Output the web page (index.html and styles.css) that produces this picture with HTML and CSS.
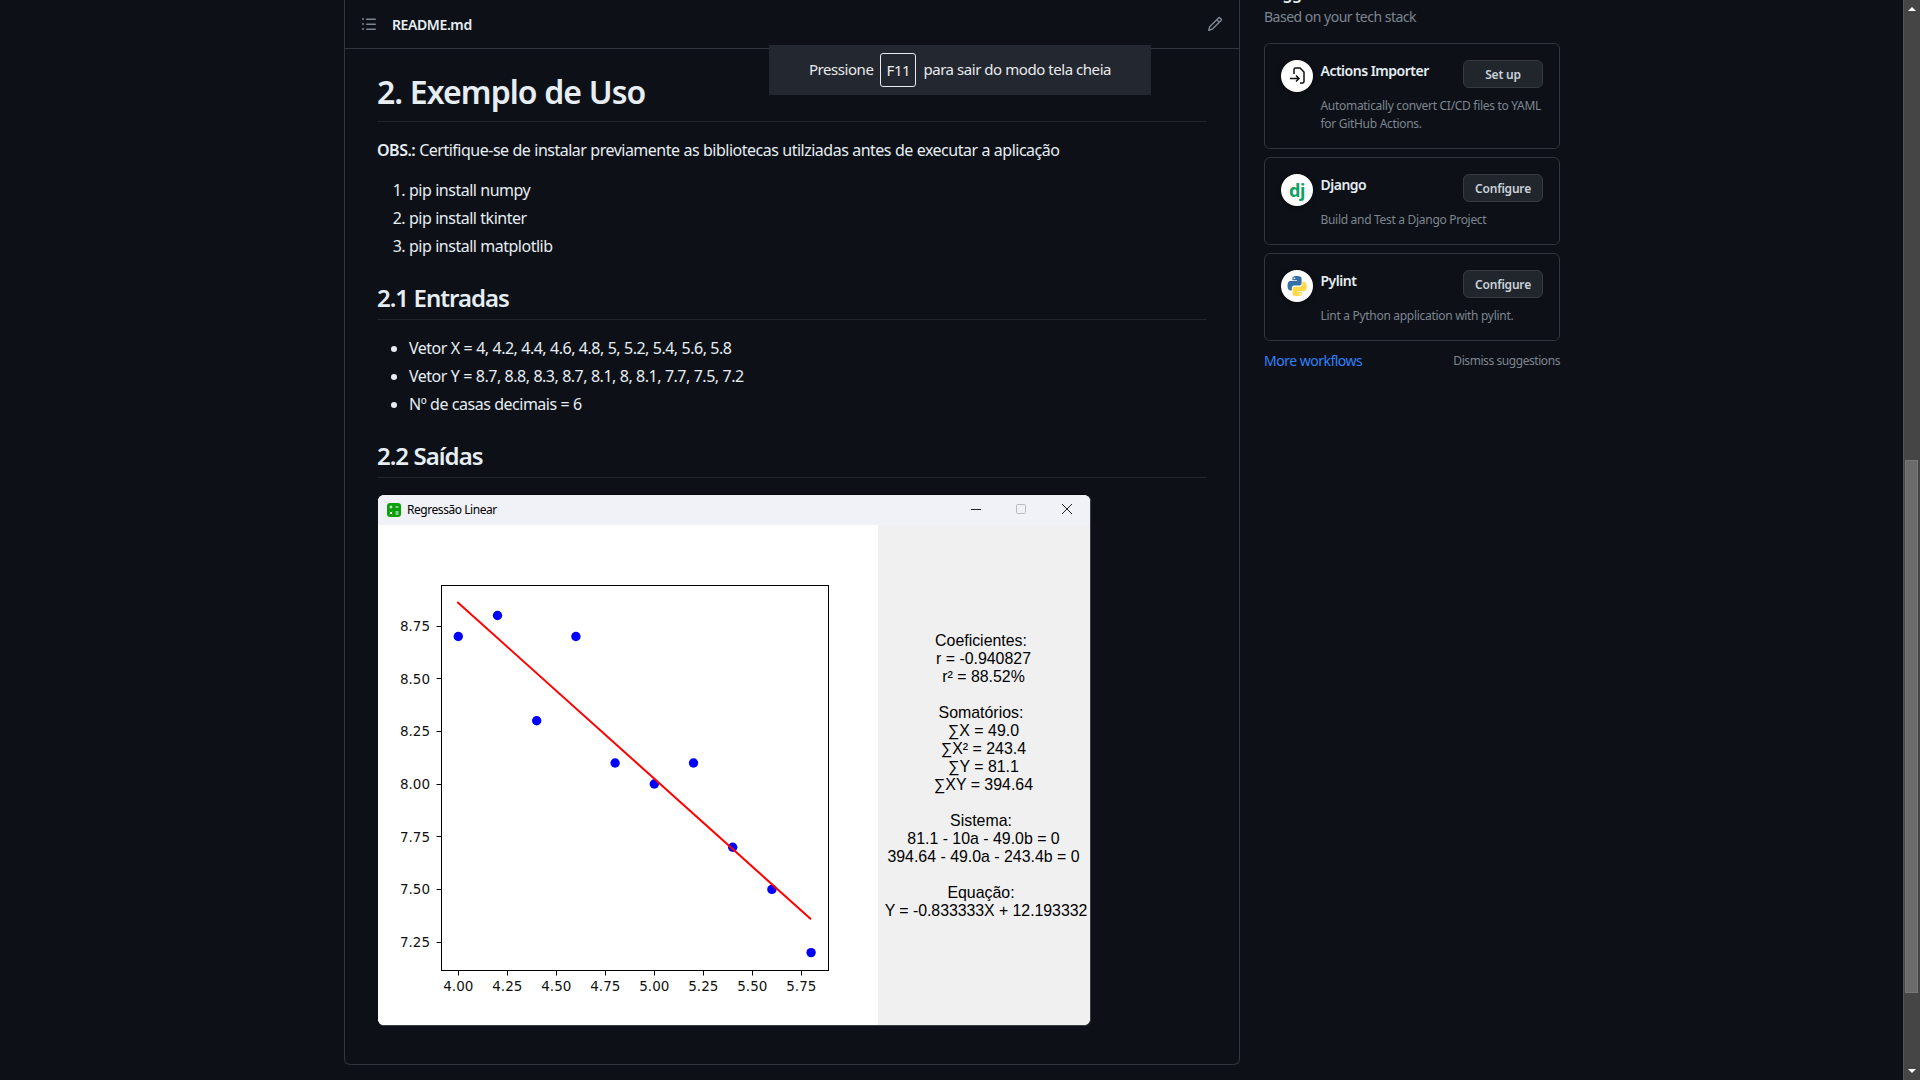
FILE: index.html
```html
<!DOCTYPE html>
<html lang="pt-BR">
<head>
    <meta charset="UTF-8">
    <title>README.md</title>
    <link rel="stylesheet" href="styles.css">
</head>
<body>
    <div class="page">
        <div class="layout">
            <!-- README -->
            <main class="readme">
                <div class="readme-header">
                    <svg class="icon-list" viewBox="0 0 16 16" width="16" height="16"><path d="M5.75 2.5h8.5a.75.75 0 0 1 0 1.5h-8.5a.75.75 0 0 1 0-1.5Zm0 5h8.5a.75.75 0 0 1 0 1.5h-8.5a.75.75 0 0 1 0-1.5Zm0 5h8.5a.75.75 0 0 1 0 1.5h-8.5a.75.75 0 0 1 0-1.5ZM2 14a1 1 0 1 1 0-2 1 1 0 0 1 0 2Zm1-6a1 1 0 1 1-2 0 1 1 0 0 1 2 0ZM2 4a1 1 0 1 1 0-2 1 1 0 0 1 0 2Z"/></svg>
                    <span class="readme-name">README.md</span>
                    <svg class="icon-edit" viewBox="0 0 16 16" width="16" height="16"><path d="M11.013 1.427a1.75 1.75 0 0 1 2.474 0l1.086 1.086a1.75 1.75 0 0 1 0 2.474l-8.61 8.61c-.21.21-.47.364-.756.445l-3.251.93a.75.75 0 0 1-.927-.928l.929-3.25c.081-.286.235-.547.445-.758l8.61-8.61Zm.176 4.823L9.75 4.81l-6.286 6.287a.253.253 0 0 0-.064.108l-.558 1.953 1.953-.558a.253.253 0 0 0 .108-.064Zm1.238-3.763a.25.25 0 0 0-.354 0L10.811 3.75l1.439 1.44 1.263-1.263a.25.25 0 0 0 0-.354Z"/></svg>
                </div>
                <article class="markdown">
                    <h1>2. Exemplo de Uso</h1>
                    <p><strong>OBS.:</strong> Certifique-se de instalar previamente as bibliotecas utilziadas antes de executar a aplicação</p>
                    <ol>
                        <li>pip install numpy</li>
                        <li>pip install tkinter</li>
                        <li>pip install matplotlib</li>
                    </ol>
                    <h2>2.1 Entradas</h2>
                    <ul>
                        <li>Vetor X = 4, 4.2, 4.4, 4.6, 4.8, 5, 5.2, 5.4, 5.6, 5.8</li>
                        <li>Vetor Y = 8.7, 8.8, 8.3, 8.7, 8.1, 8, 8.1, 7.7, 7.5, 7.2</li>
                        <li>Nº de casas decimais = 6</li>
                    </ul>
                    <h2>2.2 Saídas</h2>

                    <!-- janela da aplicação -->
                    <div class="window">
                        <div class="titlebar">
                            <svg class="app-icon" viewBox="0 0 14 14" width="14" height="14">
                                <rect width="14" height="14" rx="3" fill="#0b9f0b"/>
                                <path d="M2.5 4h3M4 2.5v3M8.5 4h3M2.8 8.8l2.4 2.4M5.2 8.8l-2.4 2.4M8.5 9h3M8.5 11h3" stroke="#fff" stroke-width="1" fill="none"/>
                            </svg>
                            <span class="window-title">Regressão Linear</span>
                            <svg class="window-controls" viewBox="0 0 101 10" width="101" height="10">
                                <path d="M0 5.5h10" stroke="#222" fill="none"/>
                                <rect x="45.5" y="0.5" width="9" height="9" rx="1" stroke="#bbb" fill="none"/>
                                <path d="M91 0l10 10M101 0L91 10" stroke="#222" fill="none"/>
                            </svg>
                        </div>
                        <div class="window-body">
                            <svg class="chart" viewBox="0 0 501 501" width="501" height="501">
                                <rect class="axes" x="64.5" y="60.5" width="387" height="385"/>
                                <g class="ticks">
                                    <path d="M81.5 445.5v5M130.5 445.5v5M179.5 445.5v5M228.5 445.5v5M277.5 445.5v5M326.5 445.5v5M375.5 445.5v5M424.5 445.5v5"/>
                                    <path d="M59.5 101.5h5M59.5 153.5h5M59.5 206.5h5M59.5 259.5h5M59.5 311.5h5M59.5 364.5h5M59.5 417.5h5"/>
                                </g>
                                <g class="labels-x">
                                    <text x="81.3" y="466">4.00</text>
                                    <text x="130.3" y="466">4.25</text>
                                    <text x="179.3" y="466">4.50</text>
                                    <text x="228.3" y="466">4.75</text>
                                    <text x="277.3" y="466">5.00</text>
                                    <text x="326.3" y="466">5.25</text>
                                    <text x="375.3" y="466">5.50</text>
                                    <text x="424.3" y="466">5.75</text>
                                </g>
                                <g class="labels-y">
                                    <text x="53" y="106">8.75</text>
                                    <text x="53" y="158.7">8.50</text>
                                    <text x="53" y="211.4">8.25</text>
                                    <text x="53" y="264">8.00</text>
                                    <text x="53" y="316.7">7.75</text>
                                    <text x="53" y="369.4">7.50</text>
                                    <text x="53" y="422">7.25</text>
                                </g>
                                <g class="points">
                                    <circle cx="81.3" cy="111.5" r="4.7"/>
                                    <circle cx="120.5" cy="90.5" r="4.7"/>
                                    <circle cx="159.7" cy="195.8" r="4.7"/>
                                    <circle cx="198.9" cy="111.5" r="4.7"/>
                                    <circle cx="238.1" cy="238" r="4.7"/>
                                    <circle cx="277.3" cy="259" r="4.7"/>
                                    <circle cx="316.5" cy="238" r="4.7"/>
                                    <circle cx="355.7" cy="322.2" r="4.7"/>
                                    <circle cx="394.9" cy="364.4" r="4.7"/>
                                    <circle cx="434.1" cy="427.6" r="4.7"/>
                                </g>
                                <line class="fit" x1="80.3" y1="77" x2="434" y2="394.3"/>
                            </svg>
                            <div class="results">
                                <span class="result-head">Coeficientes:</span><br>
                                r = -0.940827<br>
                                r² = 88.52%<br>
                                <br>
                                <span class="result-head">Somatórios:</span><br>
                                ∑X = 49.0<br>
                                ∑X² = 243.4<br>
                                ∑Y = 81.1<br>
                                ∑XY = 394.64<br>
                                <br>
                                <span class="result-head">Sistema:</span><br>
                                81.1 - 10a - 49.0b = 0<br>
                                394.64 - 49.0a - 243.4b = 0<br>
                                <br>
                                <span class="result-head">Equação:</span><br>
                                <span class="result-eq">Y = -0.833333X + 12.193332</span>
                            </div>
                        </div>
                    </div>
                </article>
            </main>

            <!-- sugestões de workflows -->
            <aside class="sidebar">
                <h3>Suggested workflows</h3>
                <p class="sidebar-note">Based on your tech stack</p>
                <div class="card">
                    <span class="avatar">
                        <svg viewBox="0 0 32 32" width="32" height="32"><path d="M13 14V9.500A1.500 1.500 0 0 1 14.500 8H19l4 4v9.500a1.500 1.500 0 0 1-1.500 1.500H19M9 18.500h9M15 15.500l3 3-3 3" fill="none" stroke="#111" stroke-width="1.500"/></svg>
                    </span>
                    <div class="card-main">
                        <div class="card-top">
                            <span class="card-title">Actions Importer</span>
                            <button class="btn">Set up</button>
                        </div>
                        <p class="card-desc">Automatically convert CI/CD files to YAML for GitHub Actions.</p>
                    </div>
                </div>
                <div class="card">
                    <span class="avatar avatar-dj">dj</span>
                    <div class="card-main">
                        <div class="card-top">
                            <span class="card-title">Django</span>
                            <button class="btn">Configure</button>
                        </div>
                        <p class="card-desc">Build and Test a Django Project</p>
                    </div>
                </div>
                <div class="card">
                    <span class="avatar">
                        <svg viewBox="0 0 32 32" width="32" height="32">
                            <path fill="#3472a6" d="M15.900 6c-4.800 0-4.500 2.100-4.500 2.100v2.200H16v.7H9.600S6.500 10.600 6.500 15.600s2.700 4.800 2.700 4.800h1.600v-2.300s-.1-2.700 2.700-2.700h4.600s2.500 0 2.500-2.500V8.600S21 6 15.900 6Zm-2.500 1.400a.8.8 0 1 1 0 1.700.8.8 0 0 1 0-1.700Z"/>
                            <path fill="#ffd845" transform="rotate(180 16.100 16.100)" d="M15.900 6c-4.800 0-4.500 2.100-4.500 2.100v2.200H16v.7H9.600S6.500 10.600 6.500 15.600s2.700 4.800 2.700 4.800h1.600v-2.300s-.1-2.700 2.700-2.700h4.600s2.500 0 2.500-2.500V8.600S21 6 15.900 6Zm-2.500 1.400a.8.8 0 1 1 0 1.700.8.8 0 0 1 0-1.700Z"/>
                        </svg>
                    </span>
                    <div class="card-main">
                        <div class="card-top">
                            <span class="card-title">Pylint</span>
                            <button class="btn">Configure</button>
                        </div>
                        <p class="card-desc">Lint a Python application with pylint.</p>
                    </div>
                </div>
                <div class="sidebar-footer">
                    <span class="more-link">More workflows</span>
                    <span class="dismiss">Dismiss suggestions</span>
                </div>
            </aside>
        </div>

        <div class="scrollbar">
            <span class="arrow-up"></span>
            <div class="scroll-track"><div class="scroll-thumb"></div></div>
            <span class="arrow-down"></span>
        </div>

        <!-- aviso de tela cheia -->
        <div class="fullscreen-bubble">
            <span class="bubble-text">Pressione</span>
            <span class="key">F11</span>
            <span class="bubble-text">para sair do modo tela cheia</span>
        </div>
    </div>
</body>
</html>
```

FILE: styles.css
```css
/* base */
* {
    box-sizing: border-box;
}

body {
    margin: 0;
    background-color: #0d1117;
    color: #e6edf3;
    font-family: "Noto Sans", "Open Sans", Arial, sans-serif;
    font-size: 16px;
    line-height: 1.5;
}

.page {
    position: relative;
    display: flex;
    height: 1080px;
    overflow: hidden;
}

.layout {
    flex: 1;
    display: flex;
    align-items: flex-start;
    gap: 24px;
    padding-left: 344px;
}

/* readme */
.readme {
    width: 896px;
    border: 1px solid #30363d;
    border-top: 0;
    border-radius: 0 0 6px 6px;
}

.readme-header {
    display: flex;
    align-items: center;
    height: 49px;
    padding: 0 16px;
    border-bottom: 1px solid #30363d;
}

.icon-list {
    fill: #7d8590;
}

.readme-name {
    margin-left: 15px;
    font-size: 14px;
    font-weight: 600;
    letter-spacing: -0.4px;
}

.icon-edit {
    margin-left: auto;
    fill: #7d8590;
}

.markdown {
    padding: 0 32px 38px;
    letter-spacing: -0.5px;
    word-spacing: 0.25px;
}

.markdown h1,
.markdown h2 {
    margin: 25px 0 16px;
    font-weight: 600;
    line-height: 1.25;
    border-bottom: 1px solid #21262d;
}

.markdown h1 {
    margin-top: 23px;
    font-size: 32px;
    padding-bottom: 8.6px;
    letter-spacing: -0.95px;
}

.markdown h2 {
    font-size: 24px;
    padding-bottom: 6.2px;
    letter-spacing: -1px;
}

.markdown p {
    margin: 16px 0;
}

.markdown strong {
    font-weight: 600;
}

.markdown ol,
.markdown ul {
    margin: 16px 0;
    padding-left: 32px;
}

.markdown li + li {
    margin-top: 4px;
}

/* window */
.window {
    width: 714px;
    height: 532px;
    overflow: hidden;
    border: 1px solid #0d1117;
    border-top-color: #05070a;
    border-right-color: #3a3f47;
    border-bottom-color: #3a3f47;
    border-radius: 7px;
    background: #fff;
    color: #000;
    letter-spacing: 0;
    word-spacing: 0;
}

.titlebar {
    display: flex;
    align-items: center;
    height: 30px;
    padding: 0 18px 0 9px;
    background: #f0f2f8;
}

.window-title {
    margin-left: 6px;
    font-size: 12px;
    letter-spacing: -0.45px;
}

.window-controls {
    margin-left: auto;
    margin-bottom: 2px;
}

.window-body {
    display: flex;
    height: 501px;
    background: #f0f0f0;
}

.chart {
    display: block;
    flex: none;
    margin-left: -1px;
    background: #fff;
}

.axes {
    fill: #fff;
    stroke: #000;
}

.ticks path {
    stroke: #000;
    fill: none;
}

.chart text {
    font-family: "DejaVu Sans", sans-serif;
    font-size: 13.5px;
    fill: #111;
}

.labels-x text {
    text-anchor: middle;
}

.labels-y text {
    text-anchor: end;
}

.points circle {
    fill: #0000ff;
}

.fit {
    stroke: #ff0000;
    stroke-width: 2;
}

.results {
    flex: 1;
    align-self: center;
    padding: 2px 1px 0 0;
    text-align: center;
    font-family: "Liberation Sans", Arial, sans-serif;
    font-size: 15.9px;
    line-height: 18px;
}

.result-head {
    margin-right: 5px;
}

.result-eq {
    margin-left: 5px;
    letter-spacing: -0.05px;
}

/* sidebar */
.sidebar {
    width: 296px;
    letter-spacing: -0.3px;
}

.sidebar h3 {
    margin: -17px 0 0;
    font-size: 16px;
    font-weight: 600;
    line-height: 21px;
}

.sidebar-note {
    margin: 2px 0 16px;
    font-size: 14px;
    line-height: 21px;
    letter-spacing: -0.5px;
    color: #7d8590;
}

.card {
    display: flex;
    gap: 7.5px;
    padding: 16px 16px 15px;
    margin-bottom: 8px;
    border: 1px solid #30363d;
    border-radius: 6px;
}

.avatar {
    flex: none;
    display: flex;
    align-items: center;
    justify-content: center;
    width: 32px;
    height: 32px;
    border-radius: 50%;
    background: #fff;
    box-shadow: 0 1px 4px rgba(0, 0, 0, 0.6);
}

.avatar-dj {
    color: #0fa263;
    font-size: 18px;
    font-weight: 700;
    line-height: 1;
}

.card-main {
    flex: 1;
    min-width: 0;
}

.card-top {
    display: flex;
    justify-content: space-between;
    align-items: flex-start;
}

.card-title {
    font-size: 14px;
    font-weight: 600;
    line-height: 21px;
    letter-spacing: -0.5px;
}

.btn {
    width: 80px;
    height: 28px;
    padding: 0;
    border: 1px solid #363b42;
    border-radius: 6px;
    background: #21262d;
    color: #c9d1d9;
    font: 600 12px "Noto Sans", Arial, sans-serif;
    letter-spacing: -0.2px;
}

.card-desc {
    margin: 9px 0 0;
    font-size: 12px;
    line-height: 18px;
    color: #7d8590;
}

.sidebar-footer {
    display: flex;
    justify-content: space-between;
    align-items: center;
    margin-top: 9px;
    height: 21px;
}

.more-link {
    font-size: 14px;
    letter-spacing: -0.5px;
    color: #2f81f7;
}

.dismiss {
    font-size: 12px;
    letter-spacing: -0.43px;
    color: #7d8590;
}

/* scrollbar */
.scrollbar {
    flex: none;
    width: 17px;
    display: flex;
    flex-direction: column;
    align-items: center;
    background: #454545;
    border-left: 1px solid #555;
}

.arrow-up,
.arrow-down {
    flex: none;
    width: 0;
    height: 0;
    border-left: 4px solid transparent;
    border-right: 4px solid transparent;
}

.arrow-up {
    margin-top: 7px;
    border-bottom: 4px solid #fff;
}

.arrow-down {
    margin-bottom: 7px;
    border-top: 4px solid #fff;
}

.scroll-track {
    flex: 1;
    width: 100%;
    padding-top: 449px;
}

.scroll-thumb {
    width: 13px;
    height: 533px;
    margin-left: 1px;
    background: #6b6b6b;
    border: 1px solid #777;
}

/* fullscreen notice */
.fullscreen-bubble {
    position: absolute;
    top: 45px;
    left: 50%;
    transform: translateX(-50%);
    display: flex;
    align-items: center;
    justify-content: center;
    gap: 7px;
    width: 382px;
    height: 50px;
    background: #23272f;
    color: #e8eaed;
    font-size: 15px;
    letter-spacing: -0.45px;
}

.bubble-text {
    margin-bottom: 2px;
}

.key {
    display: flex;
    align-items: center;
    justify-content: center;
    width: 36px;
    height: 34px;
    border: 1px solid #e8eaed;
    border-radius: 3px;
}
```
